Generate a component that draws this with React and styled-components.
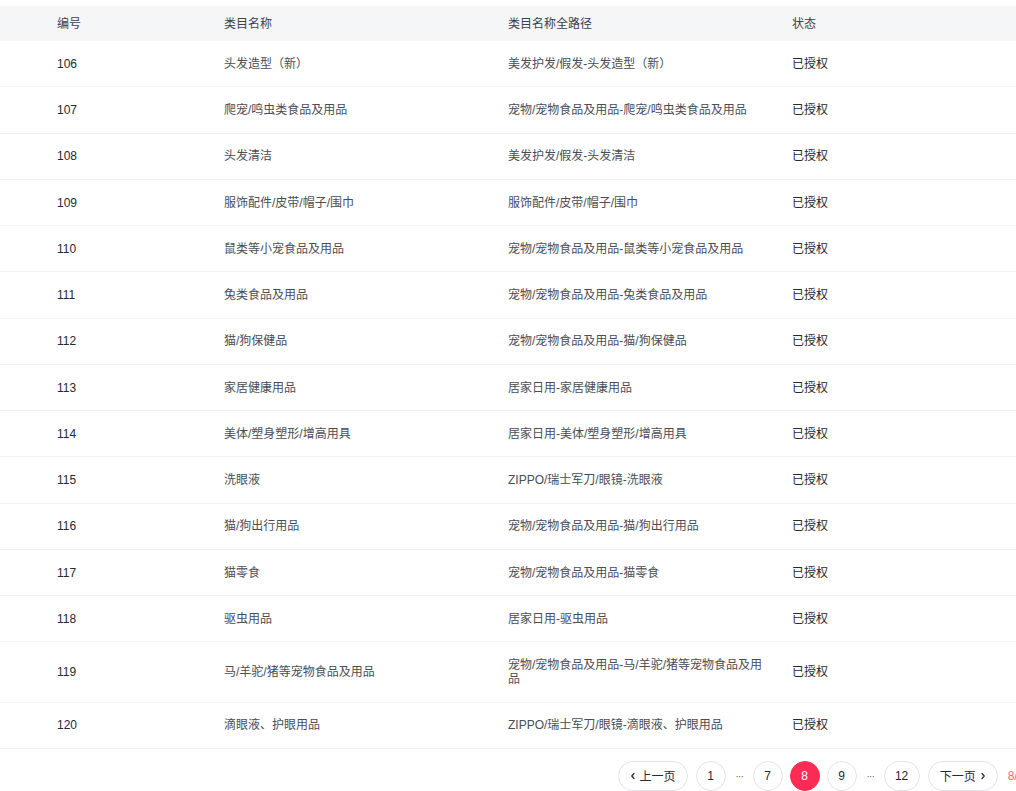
import React from 'react';
import styled, { createGlobalStyle } from 'styled-components';

const GlobalStyle = createGlobalStyle`
  html, body {
    margin: 0;
    padding: 0;
    overflow: hidden;
    background: #fff;
  }
  body {
    font-family: "Liberation Sans", "Noto Sans CJK SC", sans-serif;
    font-size: 12px;
    color: #252931;
  }
`

const ROWS = [
  ['106', '头发造型（新）', '美发护发/假发-头发造型（新）'],
  ['107', '爬宠/鸣虫类食品及用品', '宠物/宠物食品及用品-爬宠/鸣虫类食品及用品'],
  ['108', '头发清洁', '美发护发/假发-头发清洁'],
  ['109', '服饰配件/皮带/帽子/围巾', '服饰配件/皮带/帽子/围巾'],
  ['110', '鼠类等小宠食品及用品', '宠物/宠物食品及用品-鼠类等小宠食品及用品'],
  ['111', '兔类食品及用品', '宠物/宠物食品及用品-兔类食品及用品'],
  ['112', '猫/狗保健品', '宠物/宠物食品及用品-猫/狗保健品'],
  ['113', '家居健康用品', '居家日用-家居健康用品'],
  ['114', '美体/塑身塑形/增高用具', '居家日用-美体/塑身塑形/增高用具'],
  ['115', '洗眼液', 'ZIPPO/瑞士军刀/眼镜-洗眼液'],
  ['116', '猫/狗出行用品', '宠物/宠物食品及用品-猫/狗出行用品'],
  ['117', '猫零食', '宠物/宠物食品及用品-猫零食'],
  ['118', '驱虫用品', '居家日用-驱虫用品'],
  ['119', '马/羊驼/猪等宠物食品及用品', '宠物/宠物食品及用品-马/羊驼/猪等宠物食品及用品'],
  ['120', '滴眼液、护眼用品', 'ZIPPO/瑞士军刀/眼镜-滴眼液、护眼用品'],
]

const Page = styled.div`
  width: 1040px;
  padding-top: 6px;
`

const Table = styled.div`
  display: flex;
  flex-direction: column;
`

const Row = styled.div`
  display: grid;
  grid-template-columns: 208px 284px 284px 1fr;
  align-items: center;
  background: ${props => props.head ? '#f5f6f8' : '#fff'};
  border-bottom: ${props => props.head ? 'none' : '1px solid #f1f2f4'};
`

const Cell = styled.div`
  padding: ${props => props.head ? '10.5px' : '15.75px'} 12px ${props => props.head ? '10.5px' : '15.5px'} ${props => props.first ? '57px' : '16px'};
  line-height: 14px;
  color: ${props => props.head ? '#3d4048' : props.muted ? '#4a4d55' : '#252931'};
`

const Pager = styled.div`
  display: flex;
  justify-content: flex-end;
  align-items: center;
  gap: 8px;
  padding: 12px 9px 0 0;
`

const PageBtn = styled.div`
  box-sizing: border-box;
  height: 30px;
  min-width: 30px;
  padding: 0 ${props => props.wide ? '11px' : '0'};
  border-radius: 15px;
  border: 1px solid ${props => props.active ? '#fe2c55' : '#e3e4e7'};
  background: ${props => props.active ? '#fe2c55' : '#fff'};
  color: ${props => props.active ? '#fff' : '#252931'};
  display: flex;
  align-items: center;
  justify-content: center;
  gap: 4px;
  font-size: 12px;
  ${props => props.num === 2 && 'width: 36px;'}
  ${props => props.active && 'margin: 0 -1px;'}
`

const Dots = styled.span`
  width: 11px;
  text-align: center;
  color: #6b6e75;
  font-size: 11px;
  letter-spacing: -1px;
`

const Total = styled.span`
  margin-left: 2px;
  color: #fe2c55;
  opacity: 0.75;
  font-size: 12px;
`

const Chevron = ({ dir }) => (
  <svg width="6" height="8" viewBox="0 0 6 8">
    <path
      d={dir === 'left' ? 'M4 1.5 L1.8 4 L4 6.5' : 'M2 1.5 L4.2 4 L2 6.5'}
      fill="none"
      stroke="#252931"
      strokeWidth="1.3"
      strokeLinecap="round"
      strokeLinejoin="round"
    />
  </svg>
)

export default function App() {
  return (
    <Page>
      <GlobalStyle />
      <Table>
        <Row head>
          <Cell head first>编号</Cell>
          <Cell head>类目名称</Cell>
          <Cell head>类目名称全路径</Cell>
          <Cell head>状态</Cell>
        </Row>
        {ROWS.map(([id, name, path]) => (
          <Row key={id}>
            <Cell first>{id}</Cell>
            <Cell muted>{name}</Cell>
            <Cell muted>{path}</Cell>
            <Cell>已授权</Cell>
          </Row>
        ))}
      </Table>
      <Pager>
        <PageBtn wide><Chevron dir="left" />上一页</PageBtn>
        <PageBtn>1</PageBtn>
        <Dots>···</Dots>
        <PageBtn>7</PageBtn>
        <PageBtn active>8</PageBtn>
        <PageBtn>9</PageBtn>
        <Dots>···</Dots>
        <PageBtn num={2}>12</PageBtn>
        <PageBtn wide>下一页<Chevron dir="right" /></PageBtn>
        <Total>8/12</Total>
      </Pager>
    </Page>
  );
}
